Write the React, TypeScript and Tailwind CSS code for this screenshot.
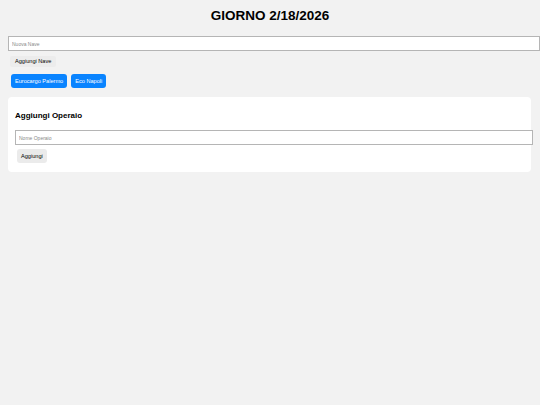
import React, { useState } from "react";

export default function App() {
    const [navi] = useState<string[]>(["Eurocargo Palermo", "Eco Napoli"]);
    const oggi = "2/18/2026";

    return (
        <div className="min-h-screen bg-[#f2f2f2] px-[8px] pt-[8px] font-['Liberation_Sans',Arial,sans-serif] text-black overflow-hidden flex flex-col items-start">
            <h1 className="w-full text-center text-[13.5px] font-bold leading-[16px]">GIORNO {oggi}</h1>

            {/* Nuova nave */}
            <input
                className="mt-[12px] block h-[15px] w-[532px] shrink-0 border border-[#b5b5b5] bg-white px-[3px] text-[5px] placeholder:text-[#8a8a8a] outline-none"
                placeholder="Nuova Nave"
            />
            <button className="mt-[5px] ml-[2px] block h-[11px] rounded-[2px] bg-[#ececec] px-[5px] text-[5.6px] leading-[11px]">
                Aggiungi Nave
            </button>

            <div className="mt-[7px] ml-[3px] flex gap-[4px]">
                {navi.map((n) => (
                    <button
                        key={n}
                        className="block h-[14px] rounded-[3px] bg-[#0a84ff] px-[4px] text-[5.6px] leading-[14px] text-white"
                    >
                        {n}
                    </button>
                ))}
            </div>

            {/* Aggiungi Operaio */}
            <div className="mt-[9px] w-[523px] rounded-[4px] bg-white px-[7px] pt-[14px] pb-[9px] flex flex-col items-start">
                <h3 className="text-[8px] font-bold leading-[10px]">Aggiungi Operaio</h3>
                <input
                    className="mt-[9px] block h-[15px] w-[518px] shrink-0 border border-[#b5b5b5] bg-white px-[3px] text-[5px] placeholder:text-[#8a8a8a] outline-none"
                    placeholder="Nome Operaio"
                />
                <button className="mt-[4px] ml-[2px] block h-[14px] rounded-[3px] bg-[#ebebeb] px-[4px] text-[5.6px] leading-[14px]">
                    Aggiungi
                </button>
            </div>
        </div>
    );
}
